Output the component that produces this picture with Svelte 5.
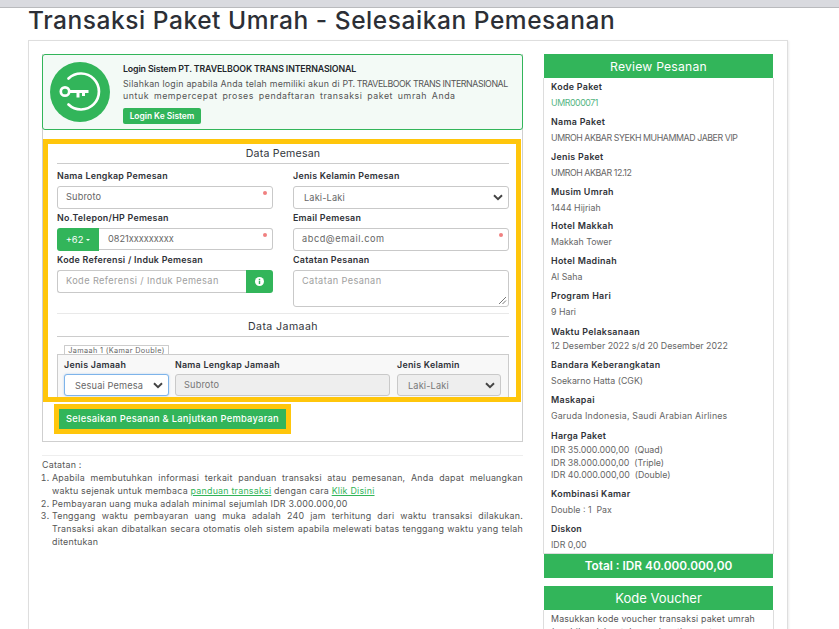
<script>
  const review = [
    { k: 'Kode Paket', v: ['UMR000071'], green: true, upper: true, h: 35 },
    { k: 'Nama Paket', v: ['UMROH AKBAR SYEKH MUHAMMAD JABER VIP'], upper: true, h: 35 },
    { k: 'Jenis Paket', v: ['UMROH AKBAR 12.12'], upper: true, h: 35 },
    { k: 'Musim Umrah', v: ['1444 Hijriah'], h: 34 },
    { k: 'Hotel Makkah', v: ['Makkah Tower'], h: 35 },
    { k: 'Hotel Madinah', v: ['Al Saha'], h: 35 },
    { k: 'Program Hari', v: ['9 Hari'], h: 35 },
    { k: 'Waktu Pelaksanaan', v: ['12 Desember 2022 s/d 20 Desember 2022'], tight: true, h: 34 },
    { k: 'Bandara Keberangkatan', v: ['Soekarno Hatta (CGK)'], h: 35 },
    { k: 'Maskapai', v: ['Garuda Indonesia, Saudi Arabian Airlines'], wide: true, h: 35 },
    { k: 'Harga Paket', v: ['IDR 35.000.000,00  (Quad)', 'IDR 38.000.000,00  (Triple)', 'IDR 40.000.000,00  (Double)'], tight: true, h: 59 },
    { k: 'Kombinasi Kamar', v: ['Double : 1  Pax'], h: 35 },
    { k: 'Diskon', v: ['IDR 0,00'], h: 31 }
  ];
</script>

<div class="topbar"></div>
<h1>Transaksi Paket Umrah - Selesaikan Pemesanan</h1>

<main class="card">
  <section class="left">
    <div class="formpanel">
      <div class="alert">
        <div class="keycircle">
          <svg viewBox="0 0 60 60" width="60" height="60" fill="none" stroke="#fff" stroke-width="2.7">
            <path d="M18.5 16.5 A18 18 0 1 1 18.5 42.5" stroke-linecap="round" />
            <circle cx="15" cy="29.5" r="4.2" />
            <path d="M19.5 29.5 H38.5 M28 29.5 V35.5 M33.5 29.5 V34" stroke-width="3" />
          </svg>
        </div>
        <div class="alerttext">
          <strong>Login Sistem PT. TRAVELBOOK TRANS INTERNASIONAL</strong>
          <p><span class="l1">Silahkan login apabila Anda telah memiliki akun di <span class="caps">PT. TRAVELBOOK TRANS INTERNASIONAL</span></span> <span class="l2">untuk mempercepat proses pendaftaran transaksi paket umrah Anda</span></p>
          <button class="loginbtn">Login Ke Sistem</button>
        </div>
      </div>

      <div class="yellow">
        <div class="sectitle first">Data Pemesan</div>
        <div class="grid">
          <div class="field">
            <span class="lbl">Nama Lengkap Pemesan</span>
            <div class="input req">Subroto</div>
          </div>
          <div class="field">
            <span class="lbl">Jenis Kelamin Pemesan</span>
            <div class="input select"><span class="selval">Laki-Laki</span><svg class="chev" viewBox="0 0 12 8" width="10" height="7"><path d="M1.2 1.4 L6 6 L10.8 1.4" fill="none" stroke="#444" stroke-width="2.4" /></svg></div>
          </div>
          <div class="field">
            <span class="lbl">No.Telepon/HP Pemesan</span>
            <div class="group">
              <div class="prefix">+62<i class="caret"></i></div>
              <div class="input req joined">0821xxxxxxxxx</div>
            </div>
          </div>
          <div class="field">
            <span class="lbl">Email Pemesan</span>
            <div class="input req wide">abcd@email.com</div>
          </div>
          <div class="field">
            <span class="lbl">Kode Referensi / Induk Pemesan</span>
            <div class="group">
              <div class="input placeholder joinedr">Kode Referensi / Induk Pemesan</div>
              <div class="infobtn">
                <svg viewBox="0 0 10 10" width="9" height="9"><circle cx="5" cy="5" r="5" fill="#fff" /><rect x="4.2" y="4.2" width="1.6" height="3.6" fill="#32b55a" /><rect x="4.2" y="2" width="1.6" height="1.5" fill="#32b55a" /></svg>
              </div>
            </div>
          </div>
          <div class="field">
            <span class="lbl">Catatan Pesanan</span>
            <div class="input textarea placeholder">Catatan Pesanan
              <svg class="grip" viewBox="0 0 9 9" width="9" height="9"><path d="M1 8 L8 1 M4.5 8 L8 4.5" stroke="#555" stroke-width="0.8" /></svg>
            </div>
          </div>
        </div>
        <hr class="soft" />
        <div class="sectitle">Data Jamaah</div>
        <div class="tabwrap">
          <div class="tab">Jamaah 1 (Kamar Double)</div>
          <div class="jamaah">
            <div class="jfield j1">
              <span class="lbl">Jenis Jamaah</span>
              <div class="input select focus"><span class="clip">Sesuai Pemesan</span><svg class="chev" viewBox="0 0 12 8" width="10" height="7"><path d="M1.2 1.4 L6 6 L10.8 1.4" fill="none" stroke="#444" stroke-width="2.4" /></svg></div>
            </div>
            <div class="jfield j2">
              <span class="lbl">Nama Lengkap Jamaah</span>
              <div class="input disabled">Subroto</div>
            </div>
            <div class="jfield j3">
              <span class="lbl">Jenis Kelamin</span>
              <div class="input select disabled"><span class="selval">Laki-Laki</span><svg class="chev" viewBox="0 0 12 8" width="10" height="7"><path d="M1.2 1.4 L6 6 L10.8 1.4" fill="none" stroke="#444" stroke-width="2.4" /></svg></div>
            </div>
          </div>
        </div>
      </div>

      <div class="submitwrap"><button class="submit">Selesaikan Pesanan &amp; Lanjutkan Pembayaran</button></div>
    </div>

    <div class="notes">
      <div class="noteshead">Catatan :</div>
      <ol>
        <li>Apabila membutuhkan informasi terkait panduan transaksi atau pemesanan, Anda dapat meluangkan waktu sejenak untuk membaca <a href="#a">panduan transaksi</a> dengan cara <a href="#b">Klik Disini</a></li>
        <li>Pembayaran uang muka adalah minimal sejumlah IDR 3.000.000,00</li>
        <li>Tenggang waktu pembayaran uang muka adalah 240 jam terhitung dari waktu transaksi dilakukan. Transaksi akan dibatalkan secara otomatis oleh sistem apabila melewati batas tenggang waktu yang telah ditentukan</li>
      </ol>
    </div>
  </section>

  <aside class="right">
    <div class="rhead">Review Pesanan</div>
    <div class="rbody">
      {#each review as r}
        <div class="ritem" class:tight={r.tight} style="height:{r.h}px">
          <div class="rk">{r.k}</div>
          {#each r.v as line}
            <div class="rv" class:green={r.green} class:upper={r.upper} class:wide={r.wide}>{line}</div>
          {/each}
        </div>
      {/each}
    </div>
    <div class="rhead total">Total : IDR 40.000.000,00</div>
    <div class="rhead voucher">Kode Voucher</div>
    <div class="rbody vbody">Masukkan kode voucher transaksi paket umrah (apabila ada) untuk mendapatkan potongan</div>
  </aside>
</main>

<style>
  :global(html), :global(body) {
    margin: 0;
    height: 629px;
    overflow: hidden;
    background: #fff;
  }
  * { box-sizing: border-box; }
  .topbar { height: 8px; background: #d9dadf; border-bottom: 1px solid #b9babd; }
  h1 {
    margin: 0;
    height: 32px;
    padding-left: 28px;
    font: 500 24.5px/25px Inter, sans-serif;
    letter-spacing: 0.55px;
    color: #2c2f36;
    white-space: nowrap;
  }
  .card {
    width: 760px;
    height: 620px;
    margin-left: 28px;
    border: 1px solid #dedede;
    box-shadow: 1px 1px 2px rgba(0,0,0,.08);
    padding: 13px 14px 0 13px;
    display: flex;
    font-family: Inter, sans-serif;
    color: #444;
  }
  .left { width: 481px; flex: none; }
  .right { width: 229px; flex: none; margin-left: 21px; }
  .formpanel {
    height: 388px;
    border-bottom: 1px solid #cfcfcf;
    border-right: 1px solid #cfcfcf;
    border-left: 1px solid #cfcfcf;
  }
  .alert {
    margin: 0 -1px;
    height: 76px;
    background: #f3faf6;
    border: 1px solid #32b55a;
    border-radius: 3px;
    display: flex;
    padding: 7px 7px;
  }
  .keycircle {
    width: 60px; height: 60px; border-radius: 50%;
    background: #32b55a;
    flex: none;
  }
  .alerttext { margin-left: 13px; font-size: 8.8px; }
  .alerttext strong { display: block; font-weight: 600; font-size: 8.8px; line-height: 14px; letter-spacing: -.13px; color: #23262b; }
  .alerttext p { margin: 2px 0 0; line-height: 12px; color: #555; width: 392px; }
  .l1, .l2 { display: block; white-space: nowrap; }
  .l1 { letter-spacing: .22px; }
  .caps { letter-spacing: -.42px; }
  .l2 { letter-spacing: .55px; word-spacing: 1.8px; }
  .loginbtn {
    display: block;
    margin-top: 6px;
    width: 78px; height: 16px;
    padding: 0;
    background: #32b55a; color: #fff;
    border: 0; border-radius: 2px;
    font: 600 8.4px/16px Inter, sans-serif;
  }
  .yellow {
    margin: 9px 0 0;
    width: 478px;
    height: 263px;
    border: 5px solid #ffc60b;
    padding: 0 7px 0 9px;
    overflow: hidden;
  }
  .sectitle {
    height: 23px;
    border-bottom: 1px solid #ccc;
    text-align: center;
    font-size: 10.6px;
    line-height: 26px;
    letter-spacing: .4px;
    color: #33363c;
  }
  .first { height: 20px; line-height: 19px; letter-spacing: .2px; }
  .grid {
    display: grid;
    grid-template-columns: 216px 216px;
    column-gap: 20px;
    grid-template-rows: 42px 42px auto;
  }
  .lbl { display: block; font-weight: 600; font-size: 8.9px; letter-spacing: .25px; color: #2f3238; white-space: nowrap; }
  .field .lbl { height: 22px; line-height: 23px; }
  .input {
    position: relative;
    height: 23px;
    border: 1px solid #c9c9c9;
    border-radius: 3px;
    background: #fff;
    padding: 0 8px;
    font-size: 9.2px;
    line-height: 19px;
    color: #666;
    white-space: nowrap;
    overflow: hidden;
    letter-spacing: .15px;
  }
  .input.wide { letter-spacing: .55px; }
  .req::after {
    content: '';
    position: absolute;
    right: 5px; top: 4px;
    width: 4px; height: 4px;
    border-radius: 50%;
    background: #f08080;
  }
  .selval { padding-left: 2px; }
  .select { line-height: 22px; }
  .chev { position: absolute; right: 5px; top: 7px; }
  .group { display: flex; }
  .prefix {
    width: 42px; height: 23px; flex: none;
    background: #32b55a; color: #fff;
    font-size: 9.4px; line-height: 23px;
    text-align: center;
    border-radius: 3px 0 0 3px;
  }
  .caret { display: inline-block; margin-left: 3px; vertical-align: 2px; border: 2px solid transparent; border-top-color: #fff; border-bottom: 0; }
  .group .input { flex: 1; min-width: 0; }
  .joined { border-radius: 0 3px 3px 0; border-left: 0; padding-left: 9px; height: 22px; line-height: 20px; letter-spacing: -.02px; }
  .joinedr { border-radius: 3px 0 0 3px; border-right: 0; }
  .infobtn { width: 27px; height: 23px; flex: none; background: #32b55a; border-radius: 0 3px 3px 0; display: flex; align-items: center; justify-content: center; }
  .placeholder { color: #a0a0a0; letter-spacing: .4px; }
  .textarea { height: 37px; line-height: 20px; }
  .grip { position: absolute; right: 1px; bottom: 1px; }
  hr.soft { border: 0; border-top: 1px solid #e9e9e9; margin: 6px 0 0; }
  .tabwrap { margin-top: 8px; }
  .tab {
    display: block;
    width: 105px;
    margin-left: 7px;
    height: 10px;
    border: 1px solid #ccc;
    border-bottom: 0;
    border-radius: 1px 1px 0 0;
    background: #fff;
    font-size: 7.3px;
    line-height: 9px;
    letter-spacing: .36px;
    text-align: center;
    color: #666;
    white-space: nowrap;
    overflow: hidden;
  }
  .jamaah {
    height: 60px;
    margin-top: -1px;
    border: 1px solid #ccc;
    background: #f8f8f8;
    display: flex;
    padding: 0 7px 0 6px;
  }
  .j1 { width: 105px; flex: none; }
  .j2 { width: 215px; flex: none; margin: 0 7px 0 6px; }
  .j3 { width: 104px; flex: none; }
  .jfield .lbl { height: 19px; line-height: 19px; }
  .jfield .input { height: 22px; }
  .focus { border-color: #7eb4ea; box-shadow: 0 0 2px rgba(100,160,230,.5); padding: 0 20px 0 10px; }
  .clip { display: block; overflow: hidden; width: 68px; }
  .disabled { background: #eee; color: #777; }
  .submitwrap { margin: 2px 0 0 11px; }
  .submit {
    display: block;
    width: 237px; height: 30px;
    border: 5px solid #ffc60b;
    background: #32b55a; color: #fff;
    padding: 0;
    font: 500 9.3px/20px Inter, sans-serif;
    letter-spacing: .29px;
  }
  .notes {
    margin-top: 13px;
    border-top: 1px solid #eee;
    padding-top: 3px;
    font-size: 8.9px;
    line-height: 12.8px;
    letter-spacing: .22px;
    color: #555;
  }
  .noteshead { height: 13px; }
  ol { margin: 0; padding: 0 0 0 10px; }
  li { text-align: justify; }
  a { color: #32b55a; text-decoration: underline; }
  .rhead {
    height: 24px;
    background: #32b55a; color: #fff;
    text-align: center;
    font-size: 12.2px;
    line-height: 25px;
    letter-spacing: .2px;
  }
  .rbody {
    border: 1px solid #ddd;
    border-top: 0;
    margin-right: -1px;
    margin-left: -1px;
    padding: 2px 7px 0;
    font-size: 8.8px;
  }
  .ritem { overflow: hidden; }
  .rk { font-weight: 600; font-size: 8.9px; line-height: 13px; height: 17px; letter-spacing: .3px; color: #2f3238; }
  .tight .rk { padding-top: 1px; height: 16px; }
  .rv { line-height: 12.5px; color: #666; white-space: pre; }
  .rv.green { color: #55b583; }
  .rv.upper { letter-spacing: -.42px; }
  .rv.wide { letter-spacing: .18px; }
  .total { font-weight: 600; font-size: 11.8px; letter-spacing: 0; }
  .voucher { margin-top: 8px; font-size: 13px; letter-spacing: 0; }
  .vbody { padding-top: 2px; line-height: 13px; letter-spacing: .18px; color: #555; border-bottom: 0; }
</style>
